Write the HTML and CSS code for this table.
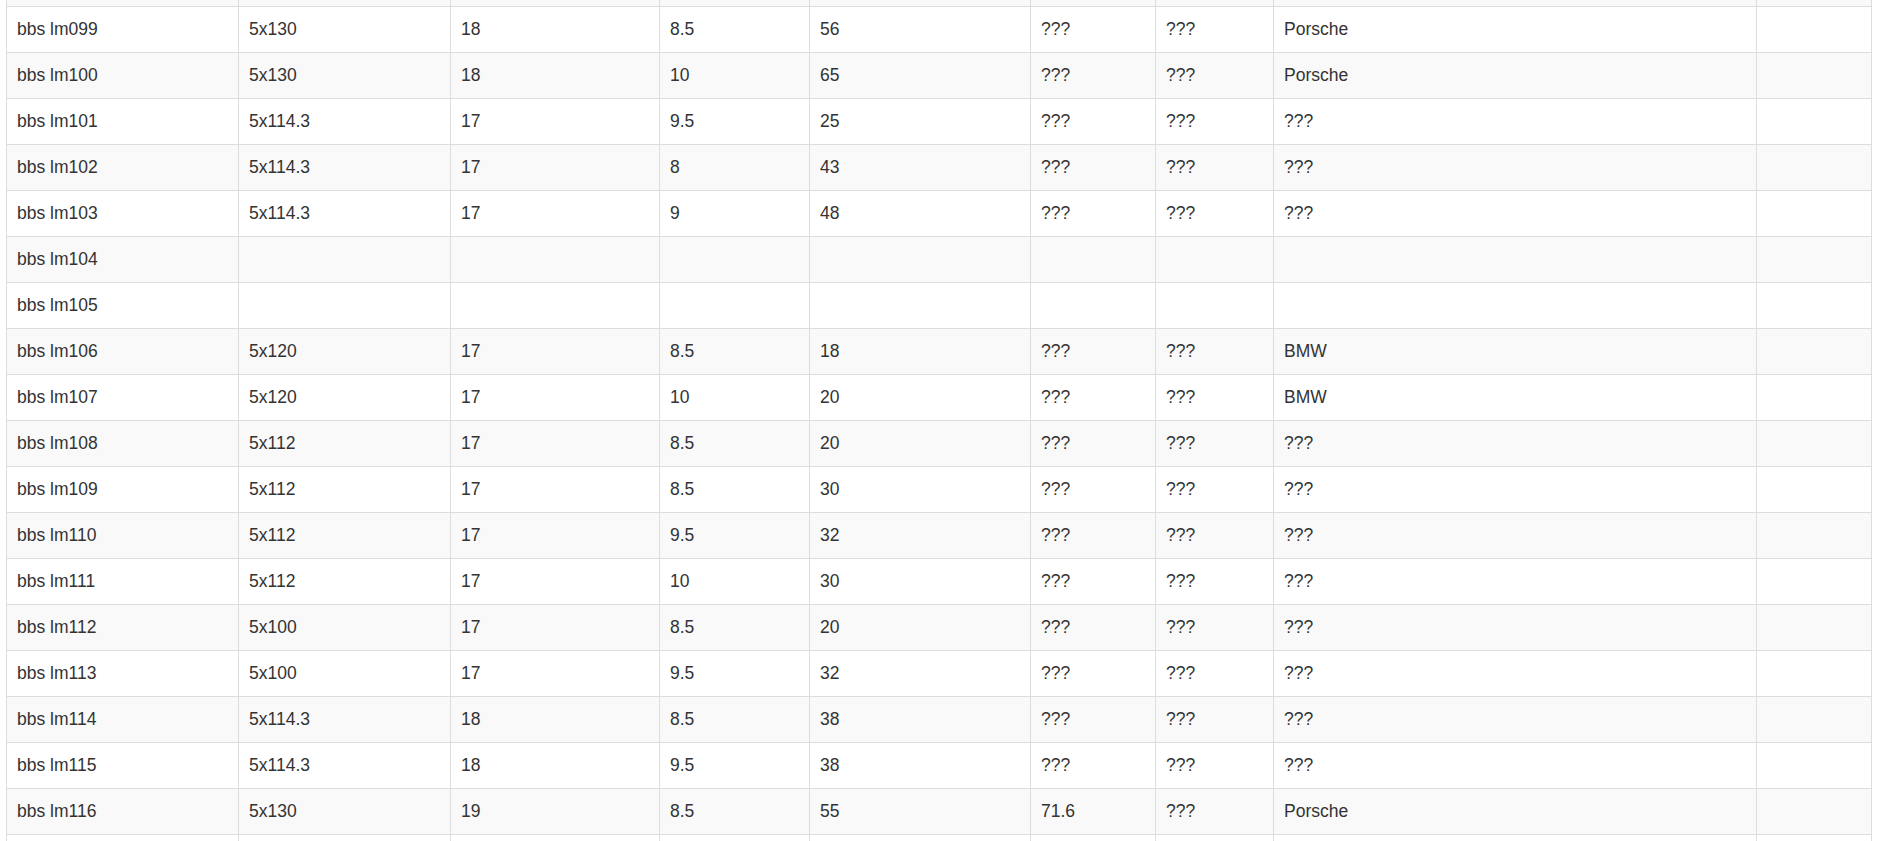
FILE: index.html
```html
<!DOCTYPE html>
<html>
<head>
<meta charset="utf-8">
<link rel="stylesheet" href="styles.css">
</head>
<body>
<div class="page">
<table class="wheels">
<colgroup>
<col class="c1"><col class="c2"><col class="c3"><col class="c4"><col class="c5"><col class="c6"><col class="c7"><col class="c8"><col class="c9">
</colgroup>
<tbody>
<tr><td></td><td></td><td></td><td></td><td></td><td></td><td></td><td></td><td></td></tr>
<tr><td>bbs lm099</td><td>5x130</td><td>18</td><td>8.5</td><td>56</td><td>???</td><td>???</td><td>Porsche</td><td></td></tr>
<tr><td>bbs lm100</td><td>5x130</td><td>18</td><td>10</td><td>65</td><td>???</td><td>???</td><td>Porsche</td><td></td></tr>
<tr><td>bbs lm101</td><td>5x114.3</td><td>17</td><td>9.5</td><td>25</td><td>???</td><td>???</td><td>???</td><td></td></tr>
<tr><td>bbs lm102</td><td>5x114.3</td><td>17</td><td>8</td><td>43</td><td>???</td><td>???</td><td>???</td><td></td></tr>
<tr><td>bbs lm103</td><td>5x114.3</td><td>17</td><td>9</td><td>48</td><td>???</td><td>???</td><td>???</td><td></td></tr>
<tr><td>bbs lm104</td><td></td><td></td><td></td><td></td><td></td><td></td><td></td><td></td></tr>
<tr><td>bbs lm105</td><td></td><td></td><td></td><td></td><td></td><td></td><td></td><td></td></tr>
<tr><td>bbs lm106</td><td>5x120</td><td>17</td><td>8.5</td><td>18</td><td>???</td><td>???</td><td>BMW</td><td></td></tr>
<tr><td>bbs lm107</td><td>5x120</td><td>17</td><td>10</td><td>20</td><td>???</td><td>???</td><td>BMW</td><td></td></tr>
<tr><td>bbs lm108</td><td>5x112</td><td>17</td><td>8.5</td><td>20</td><td>???</td><td>???</td><td>???</td><td></td></tr>
<tr><td>bbs lm109</td><td>5x112</td><td>17</td><td>8.5</td><td>30</td><td>???</td><td>???</td><td>???</td><td></td></tr>
<tr><td>bbs lm110</td><td>5x112</td><td>17</td><td>9.5</td><td>32</td><td>???</td><td>???</td><td>???</td><td></td></tr>
<tr><td>bbs lm111</td><td>5x112</td><td>17</td><td>10</td><td>30</td><td>???</td><td>???</td><td>???</td><td></td></tr>
<tr><td>bbs lm112</td><td>5x100</td><td>17</td><td>8.5</td><td>20</td><td>???</td><td>???</td><td>???</td><td></td></tr>
<tr><td>bbs lm113</td><td>5x100</td><td>17</td><td>9.5</td><td>32</td><td>???</td><td>???</td><td>???</td><td></td></tr>
<tr><td>bbs lm114</td><td>5x114.3</td><td>18</td><td>8.5</td><td>38</td><td>???</td><td>???</td><td>???</td><td></td></tr>
<tr><td>bbs lm115</td><td>5x114.3</td><td>18</td><td>9.5</td><td>38</td><td>???</td><td>???</td><td>???</td><td></td></tr>
<tr><td>bbs lm116</td><td>5x130</td><td>19</td><td>8.5</td><td>55</td><td>71.6</td><td>???</td><td>Porsche</td><td></td></tr>
<tr><td></td><td></td><td></td><td></td><td></td><td></td><td></td><td></td><td></td></tr>
</tbody>
</table>
</div>
</body>
</html>
```
FILE: styles.css
```css
html, body {
  margin: 0;
  padding: 0;
  background: #fff;
  overflow: hidden;
}
body {
  font-family: "Liberation Sans", Arial, sans-serif;
  font-size: 17.5px;
  color: #333;
}
.page {
  padding: 0 6px;
}
.wheels {
  border-collapse: collapse;
  table-layout: fixed;
  width: 1866px;
  margin-top: -40px;
}
.wheels td {
  border: 1px solid #ddd;
  padding: 10px;
  line-height: 25px;
  height: 25px;
  white-space: nowrap;
  overflow: hidden;
  text-align: left;
  vertical-align: top;
}
.wheels tr:nth-child(odd) td {
  background: #f9f9f9;
}
.c1 { width: 232px; }
.c2 { width: 212px; }
.c3 { width: 209px; }
.c4 { width: 150px; }
.c5 { width: 221px; }
.c6 { width: 125px; }
.c7 { width: 118px; }
.c8 { width: 483px; }
.c9 { width: 115px; }
```
